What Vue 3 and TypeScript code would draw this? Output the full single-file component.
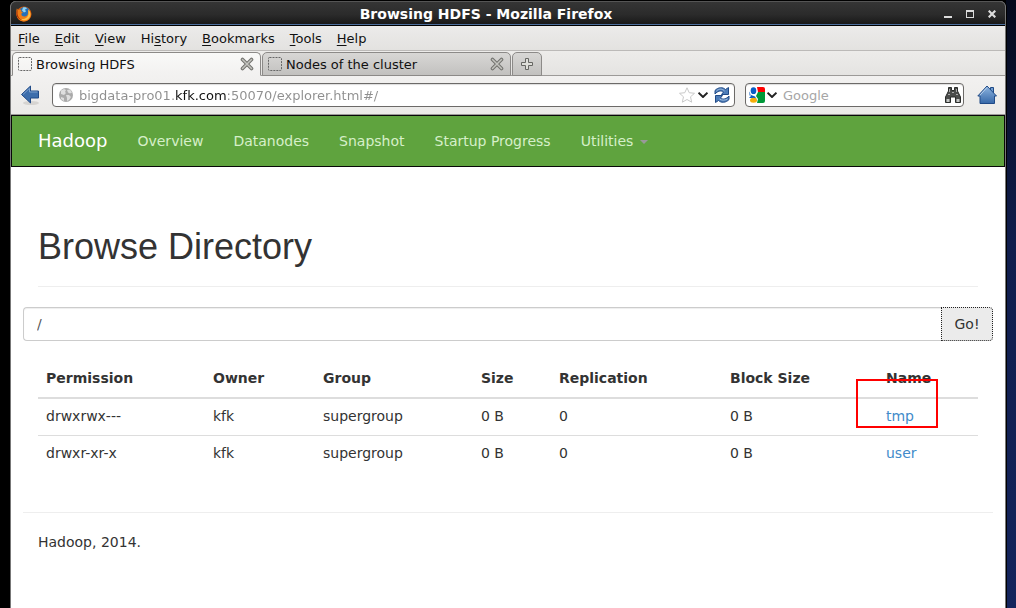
<script setup lang="ts">
import { ref } from 'vue'

interface MenuItem { before: string; key: string; after: string }
interface Entry {
  permission: string
  owner: string
  group: string
  size: string
  replication: number
  blockSize: string
  name: string
}

const menus: MenuItem[] = [
  { before: '', key: 'F', after: 'ile' },
  { before: '', key: 'E', after: 'dit' },
  { before: '', key: 'V', after: 'iew' },
  { before: 'Hi', key: 's', after: 'tory' },
  { before: '', key: 'B', after: 'ookmarks' },
  { before: '', key: 'T', after: 'ools' },
  { before: '', key: 'H', after: 'elp' },
]
const tabs = ['Browsing HDFS', 'Nodes of the cluster']
const activeTab = ref(0)
const address = ref('bigdata-pro01.kfk.com:50070/explorer.html#/')
const query = ref('')
const directory = ref('/')
const links = ['Overview', 'Datanodes', 'Snapshot', 'Startup Progress']
const columns = [
  { label: 'Permission', share: 167 },
  { label: 'Owner', share: 110 },
  { label: 'Group', share: 158 },
  { label: 'Size', share: 78 },
  { label: 'Replication', share: 171 },
  { label: 'Block Size', share: 156 },
  { label: 'Name', share: 100 },
]
const totalShare = columns.reduce((sum, c) => sum + c.share, 0)
const entries: Entry[] = [
  { permission: 'drwxrwx---', owner: 'kfk', group: 'supergroup', size: '0 B', replication: 0, blockSize: '0 B', name: 'tmp' },
  { permission: 'drwxr-xr-x', owner: 'kfk', group: 'supergroup', size: '0 B', replication: 0, blockSize: '0 B', name: 'user' },
]
</script>

<template>
  <div class="desktop">
    <div class="window">
      <header class="titlebar">
        <svg class="logo" viewBox="0 0 16 16" aria-hidden="true">
          <circle cx="8" cy="8" r="7.5" fill="#d95c0b" />
          <circle cx="8.5" cy="6.5" r="5.5" fill="#2671b8" />
          <path d="M7 1.5c2-.8 3.5 0 4 1l-2 1 1 2-2 1-2-2z" fill="#8fd3f2" />
          <path d="M1 2c0 1 .5 1.5 1.500 2 1-.8 2.500-.8 3 0L5 5.500l2 .5-1.500 1.500c-.5 2 1 3 3 3 2 0 3.500-1.500 3.500-3.500V3.500c3 2.500 3.500 6 1.500 9-2.500 3.500-8 4-11 .8C0 10.500-.3 5.500 1 2z" fill="#ef7e16" />
          <path d="M12.500 3.500c3 3 2.500 8-1 10-2 1.200-5 1-6.500-.5 4 .5 7-1.500 7.500-5z" fill="#fbc34a" />
          <path d="M1.500 3v5c.5 3 2 5 4.500 6-4-.6-6-4-5.500-8z" fill="#a52e0a" />
        </svg>
        <div class="title">Browsing HDFS - Mozilla Firefox</div>
        <div class="controls">
          <button type="button" aria-label="Minimize">
            <svg viewBox="0 0 8 8"><path d="M0 6h8v2H0z" fill="#dcdcdc" /></svg>
          </button>
          <button type="button" aria-label="Maximize">
            <svg viewBox="0 0 8 8"><path d="M0 0h8v8H0zM1 2v5h6V2z" fill="#dcdcdc" fill-rule="evenodd" /></svg>
          </button>
          <button type="button" aria-label="Close">
            <svg viewBox="0 0 8 8"><path d="M.7.7l6.600 6.600M7.300.7L.7 7.300" stroke="#dcdcdc" stroke-width="2.200" /></svg>
          </button>
        </div>
      </header>

      <nav class="menubar" aria-label="Application menu">
        <button v-for="m in menus" :key="m.key + m.after" type="button">{{ m.before }}<u>{{ m.key }}</u>{{ m.after }}</button>
      </nav>

      <div class="tabs">
        <div v-for="(tab, i) in tabs" :key="tab" class="tab" :class="{ active: i === activeTab }">
          <button type="button" class="tab-name" @click="activeTab = i">
            <svg viewBox="0 0 14 14" aria-hidden="true">
              <rect x=".5" y=".5" width="13" height="13" rx="1" fill="none" stroke="#666" stroke-dasharray="2 1" />
            </svg>
            <span>{{ tab }}</span>
          </button>
          <button type="button" class="tab-close" :aria-label="`Close ${tab}`">
            <svg viewBox="0 0 14 14">
              <path d="M2.500 2.500l9 9M11.500 2.500l-9 9" stroke="#73736f" stroke-width="3.600" stroke-linecap="round" />
              <path d="M2.500 2.500l9 9M11.500 2.500l-9 9" stroke="#c4c4bf" stroke-width="1.500" stroke-linecap="round" />
            </svg>
          </button>
        </div>
        <button type="button" class="new-tab" aria-label="New tab">
          <svg viewBox="0 0 12 12"><path d="M4.500.5h3v4h4v3h-4v4h-3v-4h-4v-3h4z" fill="#deded9" stroke="#666662" /></svg>
        </button>
      </div>

      <div class="toolbar">
        <button type="button" class="back" aria-label="Back">
          <svg viewBox="0 0 20 20">
            <defs><linearGradient id="blue" x2="0" y2="1"><stop stop-color="#8fb5e0" /><stop offset="1" stop-color="#3668a8" /></linearGradient></defs>
            <ellipse cx="11" cy="18" rx="8" ry="2" fill="#d6d4d1" />
            <path d="M1.500 9.500L10.500 1v5h8v7h-8v5z" fill="#3d6eac" stroke="#204a87" stroke-linejoin="round" />
            <path d="M3 9.500L9.500 3.300V7h8" fill="none" stroke="#7da0cc" />
          </svg>
        </button>
        <div class="field address">
          <svg class="globe" viewBox="0 0 14 14" aria-hidden="true">
            <circle cx="7" cy="7" r="7" fill="#aaa" />
            <path d="M2 2.500l3-1.500 2 1-1 2 1 1-2 2-3-1zM8 2l3-.5 2 3-2 1-2-1zM7 7l3 0 2 2-2 3-2 1v-3zM2 9l3 1v3l-3-2z" fill="#dedede" />
          </svg>
          <input v-model="address" class="url" aria-label="Address" spellcheck="false" />
          <button type="button" class="star" aria-label="Bookmark this page">
            <svg viewBox="0 0 16 16"><path d="M8 .8l2.200 4.900 5.300.6-4 3.500 1.200 5.400L8 12.500l-4.700 2.700 1.200-5.400-4-3.500 5.300-.6z" fill="#fff" stroke="#c9c9c9" stroke-linejoin="round" /></svg>
          </button>
          <button type="button" class="chevron" aria-label="Show history">
            <svg viewBox="0 0 10 6"><path d="M.5.7L5 5 9.500.7" fill="none" stroke="#222" stroke-width="2" /></svg>
          </button>
          <button type="button" class="reload" aria-label="Reload">
            <svg viewBox="0 0 16 16">
              <path d="M1 7V3.500C4 0 9 0 11.500 2.500L14.500.5v7h-7L9.500 5C7 3 3.500 4 1 7z" fill="#4e7db8" stroke="#204a87" stroke-linejoin="round" />
              <path d="M15 9v3.500c-3 3.500-8 3.500-10.500 1l-3 2v-7h7L6.500 11c2.500 2 6 1 8.500-2z" fill="#4e7db8" stroke="#204a87" stroke-linejoin="round" />
              <path d="M2.500 4C5 1.500 8 1.500 10.500 4M5.500 12c2 1.500 5.500 1.500 8 0" fill="none" stroke="#a5c0e0" />
            </svg>
          </button>
        </div>
        <div class="field search">
          <button type="button" class="engine" aria-label="Choose search engine">
            <svg class="google" viewBox="0 0 16 16">
              <path d="M0 2q0-2 2-2h7v16H2q-2 0-2-2z" fill="#fff" />
              <path d="M8 0h6q2 0 2 2v3H9z" fill="#f00" />
              <path d="M9 5h7v9q0 2-2 2H8l1-4-2-3z" fill="#009939" />
              <ellipse cx="4.500" cy="3.700" rx="2.800" ry="3.400" fill="#0b5dc4" />
              <path d="M0 4.500l2 3.500 4 1.500 1.500 2.500-3-1L0 11l2-2-2-1z" fill="#0b5dc4" />
              <path d="M.5 5v3l1.500 1z" fill="#fff" />
              <ellipse cx="4.500" cy="13.300" rx="3.500" ry="2.500" fill="#f5ae0a" />
            </svg>
            <svg class="arrow" viewBox="0 0 10 6"><path d="M.5.7L5 5 9.500.7" fill="none" stroke="#222" stroke-width="2" /></svg>
          </button>
          <input v-model="query" class="query" placeholder="Google" aria-label="Search with Google" />
          <button type="button" class="find" aria-label="Search">
            <svg viewBox="0 0 16 16">
              <path d="M3.500.5h3v3h3v-3h3V4l1.500 3 1.500 3v5.500h-5V10h-5v5.500h-5V10L2 7l1.500-3z" fill="#4b4d4b" stroke="#2b2d2b" />
              <path d="M4.500 2v3M11.500 2v3M3 7.500h2M11 7.500h2M7 5.500h2" stroke="#aaa" />
              <path d="M1.500 12h3v3h-3zM11.500 12h3v3h-3z" fill="#c4c6c4" />
            </svg>
          </button>
        </div>
        <button type="button" class="home" aria-label="Home">
          <svg viewBox="0 0 20 20">
            <path d="M13.500 2.500h3v6h-3z" fill="#6e9cd0" stroke="#204a87" />
            <path d="M10 1L.8 11H3v7.500h14.500V11h2z" fill="url(#blue)" stroke="#204a87" stroke-linejoin="round" />
            <path d="M10 2.500L3 10.200" fill="none" stroke="#b7cfea" />
          </svg>
        </button>
      </div>

      <div class="page">
        <nav class="navbar" aria-label="Hadoop">
          <a class="brand" href="#">Hadoop</a>
          <a v-for="l in links" :key="l" href="#">{{ l }}</a>
          <a href="#">Utilities <span class="caret"></span></a>
        </nav>

        <main class="container">
          <div class="page-header"><h1>Browse Directory</h1></div>
          <form class="path" @submit.prevent>
            <input v-model="directory" aria-label="Directory" />
            <button type="submit">Go!</button>
          </form>
          <div class="listing">
            <table>
              <colgroup>
                <col v-for="c in columns" :key="c.label" :style="{ width: (c.share / totalShare) * 100 + '%' }" />
              </colgroup>
              <thead>
                <tr><th v-for="c in columns" :key="c.label" scope="col">{{ c.label }}</th></tr>
              </thead>
              <tbody>
                <tr v-for="e in entries" :key="e.name">
                  <td>{{ e.permission }}</td>
                  <td>{{ e.owner }}</td>
                  <td>{{ e.group }}</td>
                  <td>{{ e.size }}</td>
                  <td>{{ e.replication }}</td>
                  <td>{{ e.blockSize }}</td>
                  <td><a href="#">{{ e.name }}</a></td>
                </tr>
              </tbody>
            </table>
            <div class="highlight"></div>
          </div>
          <footer>Hadoop, 2014.</footer>
        </main>
      </div>
    </div>
  </div>
</template>

<style>
body {
  margin: 0;
  background: #000;
}
</style>

<style scoped>
* {
  box-sizing: border-box;
}
.desktop {
  display: flex;
  min-height: 100vh;
  padding: 1px 10px 0;
  background: linear-gradient(#050a1c, #101d4c 40%, #14245c) right / 10px 100% no-repeat, #000;
  font-family: "DejaVu Sans", sans-serif;
  font-size: 14px;
  color: #333;
}
button,
input {
  margin: 0;
  padding: 0;
  border: 0;
  background: none;
  font: inherit;
  color: inherit;
}
input {
  min-width: 0;
  outline: none;
}
svg {
  display: block;
  flex: none;
}
.window {
  display: flex;
  flex: 1;
  flex-direction: column;
  min-width: 0;
  border-right: 1px solid #777;
  border-left: 1px solid #777;
  border-radius: 6px 6px 0 0;
  background: #fff;
  box-shadow: 1px 0 #000;
}
.titlebar {
  display: flex;
  align-items: center;
  height: 25px;
  padding: 0 9px 0 5px;
  border-top: 1px solid #555;
  border-bottom: 1px solid #000;
  border-radius: 5px 5px 0 0;
  background: linear-gradient(#353535, #2b2b2b 55%, #171717);
  box-shadow: inset 0 -1px #4d6f9d;
  color: #fff;
}
.logo {
  width: 16px;
  height: 16px;
}
.title {
  flex: 1;
  padding-right: 4px;
  font-size: 14px;
  font-weight: bold;
  text-align: center;
}
.controls {
  display: flex;
  gap: 14px;
}
.controls svg {
  width: 8px;
  height: 8px;
}
.menubar {
  display: flex;
  gap: 1px;
  height: 25px;
  border-bottom: 1px solid #bcbab8;
  background: linear-gradient(#ecebea, #e3e2e0);
  font-size: 13px;
  color: #111;
}
.menubar button {
  padding: 0 7px;
}
u {
  text-underline-offset: 2px;
}
.tabs {
  display: flex;
  gap: 1px;
  height: 25px;
  padding: 1px 1px 0;
  background: linear-gradient(#edecea, #e4e3e1);
  box-shadow: inset 0 -1px #9c9a98;
  font-size: 13px;
  color: #111;
}
.tab {
  display: flex;
  flex: 0 1 249px;
  align-items: center;
  justify-content: space-between;
  min-width: 0;
  padding: 0 6px 0 5px;
  border: 1px solid #8c8a88;
  border-radius: 5px 5px 0 0;
  background: linear-gradient(#d8d7d5, #c2c1bf);
}
.tab.active {
  border-bottom-color: #f2f1f0;
  background: linear-gradient(#f9f9f8, #f2f1f0);
}
.tab-name {
  display: flex;
  flex: 1;
  align-items: center;
  gap: 4px;
}
.tab-name svg,
.tab-close svg {
  width: 14px;
  height: 14px;
}
.new-tab {
  display: flex;
  align-items: center;
  justify-content: center;
  width: 30px;
  border: 1px solid #8c8a88;
  border-radius: 5px 5px 0 0;
  background: linear-gradient(#d8d7d5, #c2c1bf);
}
.new-tab svg {
  width: 12px;
  height: 12px;
}
.toolbar {
  display: flex;
  align-items: center;
  height: 39px;
  padding: 0 8px 0 9px;
  border-bottom: 1px solid #9c9a98;
  background: linear-gradient(#f2f1f0, #ebeae8);
}
.back svg,
.home svg {
  width: 20px;
  height: 20px;
}
.field {
  display: flex;
  align-items: center;
  height: 24px;
  border: 1px solid #6c6a68;
  border-radius: 4px;
  background: #fff;
  box-shadow: inset 0 1px 1px #ddd;
  font-size: 13px;
}
.address {
  flex: 1;
  min-width: 0;
  margin: 0 10px 0 12px;
  padding: 0 4px 0 6px;
}
.globe {
  width: 14px;
  height: 14px;
}
.url {
  flex: 1;
  margin-left: 6px;
  color: #8e8e8e;
  background: linear-gradient(90deg, #8e8e8e 95px, #111 95px, #111 149px, #8e8e8e 149px);
  background-clip: text;
  -webkit-text-fill-color: transparent;
}
.star svg,
.reload svg,
.google,
.find svg {
  width: 16px;
  height: 16px;
}
.chevron {
  margin: 0 6px 0 3px;
}
.chevron svg,
.arrow {
  width: 10px;
  height: 6px;
}
.search {
  width: 219px;
  margin-right: 13px;
  padding: 0 2px 0 3px;
}
.engine {
  display: flex;
  align-items: center;
  gap: 2px;
}
.query {
  flex: 1;
  margin-left: 6px;
}
.query::placeholder {
  color: #a6a6a6;
  opacity: 1;
}
.page {
  flex: 1;
  line-height: 20px;
}
.navbar {
  display: flex;
  align-items: center;
  min-height: 52px;
  padding: 0 11px;
  border: 1px solid #080808;
  background: #5fa33e;
}
.navbar a {
  padding: 15px;
  color: #d6efc9;
  text-decoration: none;
}
.navbar .brand {
  font-size: 18px;
  color: #fff;
}
.caret {
  display: inline-block;
  margin-left: 2px;
  border-top: 4px solid #999;
  border-right: 4px solid transparent;
  border-left: 4px solid transparent;
  vertical-align: middle;
}
.container {
  padding: 60px 12px 0;
}
.page-header {
  margin: 0 15px 20px;
  padding-bottom: 19px;
  border-bottom: 1px solid #eee;
}
h1 {
  margin: 0;
  font-family: "Liberation Sans", Arial, sans-serif;
  font-size: 36px;
  font-weight: 400;
  line-height: 40px;
}
.path {
  display: flex;
  height: 34px;
}
.path input {
  flex: 1;
  padding: 0 13px;
  border: 1px solid #ccc;
  border-right: 0;
  border-radius: 4px 0 0 4px;
  box-shadow: inset 0 1px 1px #eee;
  color: #555;
}
.path button {
  width: 52px;
  border: 1px dotted #222;
  border-radius: 0 4px 4px 0;
  background: #ebebeb;
}
.listing {
  position: relative;
  margin: 19px 15px 0;
}
table {
  width: 100%;
  border-spacing: 0;
  table-layout: fixed;
}
th,
td {
  padding: 7px 8px 9px;
  text-align: left;
}
th {
  padding-top: 8px;
  border-bottom: 2px solid #ddd;
}
tr + tr td {
  border-top: 1px solid #ddd;
}
td a {
  color: #428bca;
  text-decoration: none;
}
.highlight {
  position: absolute;
  top: 19px;
  right: 40px;
  width: 82px;
  height: 49px;
  border: 2px solid #f00;
  pointer-events: none;
}
footer {
  margin-top: 40px;
  padding: 19px 15px 20px;
  border-top: 1px solid #eee;
}
</style>
